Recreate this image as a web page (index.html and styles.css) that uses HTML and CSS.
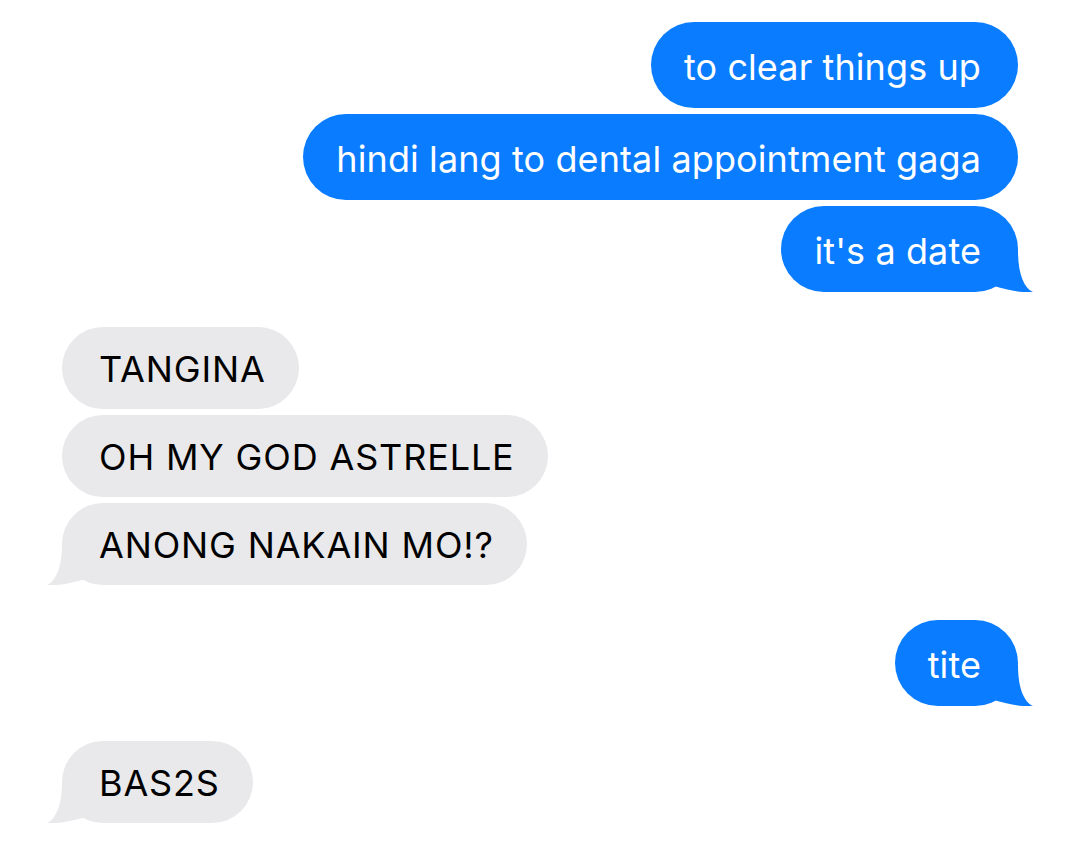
FILE: index.html
```html
<!DOCTYPE html>
<html>
<head>
<meta charset="utf-8">
<link rel="stylesheet" href="styles.css">
</head>
<body>
<div class="thread">
  <div class="group sent">
    <div class="bubble">to clear things up</div>
    <div class="bubble">hindi lang to dental appointment gaga</div>
    <div class="bubble tail">it's a date
      <svg class="tail-svg" width="45" height="45" viewBox="0 0 45 45"><path d="M30,4 C30,27 36,41 45,45 C33,46 20,43 6,39 L4,18 Z"/></svg>
    </div>
  </div>
  <div class="group recv">
    <div class="bubble">TANGINA</div>
    <div class="bubble">OH MY GOD ASTRELLE</div>
    <div class="bubble tail">ANONG NAKAIN MO!?
      <svg class="tail-svg" width="45" height="45" viewBox="0 0 45 45"><path d="M15,4 C15,27 9,41 0,45 C12,46 25,43 39,39 L41,18 Z"/></svg>
    </div>
  </div>
  <div class="group sent">
    <div class="bubble tail">tite
      <svg class="tail-svg" width="45" height="45" viewBox="0 0 45 45"><path d="M30,4 C30,27 36,41 45,45 C33,46 20,43 6,39 L4,18 Z"/></svg>
    </div>
  </div>
  <div class="group recv">
    <div class="bubble tail">BAS2S
      <svg class="tail-svg" width="45" height="45" viewBox="0 0 45 45"><path d="M15,4 C15,27 9,41 0,45 C12,46 25,43 39,39 L41,18 Z"/></svg>
    </div>
  </div>
</div>
</body>
</html>
```
FILE: styles.css
```css
html, body {
  margin: 0;
  padding: 0;
  background: #ffffff;
}
body {
  width: 1080px;
  height: 842px;
  overflow: hidden;
  font-family: "Inter", "Noto Sans", sans-serif;
}
.thread {
  display: flex;
  flex-direction: column;
  gap: 35px;
  padding: 22px 62px 0 62px;
}
.group {
  display: flex;
  flex-direction: column;
  gap: 6px;
}
.group.sent { align-items: flex-end; }
.group.recv { align-items: flex-start; }
.bubble {
  position: relative;
  font-size: 36px;
  line-height: 40px;
  white-space: nowrap;
  border-radius: 44px;
}
.sent .bubble {
  background: #0a7cff;
  color: #ffffff;
  padding: 25px 37px 21px 33px;
  letter-spacing: 0.1px;
}
.recv .bubble {
  background: #e9e9eb;
  color: #000000;
  padding: 22px 33px 20px 37px;
  letter-spacing: 0.85px;
}
.tail-svg {
  position: absolute;
  bottom: 0;
}
.sent .tail-svg { right: -15px; fill: #0a7cff; }
.recv .tail-svg { left: -15px; fill: #e9e9eb; }
```
